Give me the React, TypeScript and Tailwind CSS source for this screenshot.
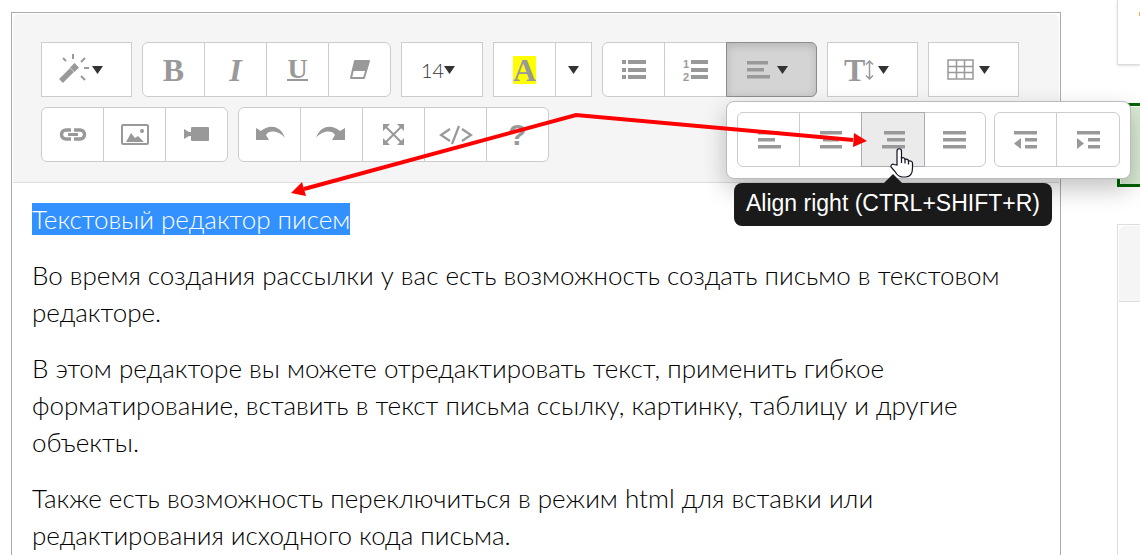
import type { ReactNode } from "react";
import clsx from "clsx";

const paragraphs = [
  "Во время создания рассылки у вас есть возможность создать письмо в текстовом редакторе.",
  "В этом редакторе вы можете отредактировать текст, применить гибкое форматирование, вставить в текст письма ссылку, картинку, таблицу и другие объекты.",
  "Также есть возможность переключиться в режим html для вставки или редактирования исходного кода письма.",
];

function Icon({ children }: { children: ReactNode }) {
  return (
    <svg aria-hidden viewBox="0 0 33 33" className="h-[33px] w-[33px] shrink-0 overflow-visible fill-[#999]">
      {children}
    </svg>
  );
}

function Rows({ rows }: { rows: [number, number][] }) {
  return (
    <Icon>
      {rows.map(([x, width], i) => (
        <rect key={i} x={x} y={8 + i * 7} width={width} height="3.5" />
      ))}
    </Icon>
  );
}

function Caret() {
  return (
    <svg aria-hidden viewBox="0 0 11 8" className="h-2 w-[11px] shrink-0 fill-[#333]">
      <path d="M0 0H11L5.5 8Z" />
    </svg>
  );
}

function Letter({ children, className = "text-[32px] leading-7" }: { children: ReactNode; className?: string }) {
  return (
    <span className={clsx("font-['Liberation_Serif',serif] font-bold text-[#999]", className)}>
      {children}
    </span>
  );
}

function Group({ children, square }: { children: ReactNode; square?: boolean }) {
  return (
    <div
      className={clsx(
        "flex",
        !square && "[&>*:first-child>button]:rounded-l-md [&>*:last-child>button]:rounded-r-md",
      )}
    >
      {children}
    </div>
  );
}

function ToolButton({
  label,
  children,
  className = "w-[63px]",
  tone = "border-[#ccc] bg-white",
  overlay,
}: {
  label: string;
  children: ReactNode;
  className?: string;
  tone?: string;
  overlay?: ReactNode;
}) {
  return (
    <div className={clsx("relative -ml-px first:ml-0", overlay && "z-10")}>
      <button
        type="button"
        aria-label={label}
        className={clsx("flex h-[55px] items-center justify-center border", tone, className)}
      >
        {children}
      </button>
      {overlay}
    </div>
  );
}

const dropdown = "w-[91px] gap-px pr-3";

function Tooltip({ children }: { children: ReactNode }) {
  return (
    <div
      role="tooltip"
      className="absolute left-1/2 top-[71px] -translate-x-1/2 whitespace-nowrap rounded-lg bg-[#1a1a1a] px-3 pb-[5px] pt-[3px] font-['Liberation_Sans',sans-serif] text-[23px] leading-[35px] text-white"
    >
      <span className="absolute -top-[9px] left-1/2 -ml-[9px] border-x-9 border-b-9 border-x-transparent border-b-[#1a1a1a]" />
      {children}
    </div>
  );
}

function ParagraphMenu() {
  return (
    <div className="absolute left-0 top-[59px] z-20 flex gap-2 rounded-lg border border-[#bbb] bg-white px-2.5 pb-[11px] pt-2.5 shadow-[0_10px_24px_rgba(0,0,0,0.24)]">
      <Group>
        <ToolButton label="Align left">
          <Rows rows={[[6, 21], [6, 17], [6, 23]]} />
        </ToolButton>
        <ToolButton label="Align center">
          <Rows rows={[[6, 22], [9, 16], [6, 22]]} />
        </ToolButton>
        <ToolButton
          label="Align right"
          className="w-16"
          tone="border-[#adadad] bg-[#ebebeb]"
          overlay={<Tooltip>Align right (CTRL+SHIFT+R)</Tooltip>}
        >
          <Rows rows={[[7, 21], [10, 18], [5, 23]]} />
        </ToolButton>
        <ToolButton label="Justify full" className="w-[62px]">
          <Rows rows={[[4, 23], [4, 23], [4, 23]]} />
        </ToolButton>
      </Group>
      <Group>
        <ToolButton label="Outdent">
          <Icon>
            <path d="M5 8h23v3.500H5zM16 15h12v3.500H16zM16 22h12v3.500H16zM5 20.500l7-5.500v11z" />
          </Icon>
        </ToolButton>
        <ToolButton label="Indent" className="w-16">
          <Icon>
            <path d="M5 8h23v3.500H5zM16 15h12v3.500H16zM16 22h12v3.500H16zM12 20.500l-7-5.500v11z" />
          </Icon>
        </ToolButton>
      </Group>
    </div>
  );
}

function Toolbar() {
  return (
    <div className="flex flex-wrap gap-2.5 rounded-t-md border-b border-[#ddd] bg-[#f5f5f5] px-7 pb-5 pt-7">
      <Group square>
        <ToolButton label="Style" className={dropdown}>
          <Icon>
            <path d="M3 28L14 17" stroke="#999" strokeWidth="5.500" />
            <path d="M16.500 10l4.500 4.500-4.500 4.500-4.500-4.500z" />
            <path d="M15 1v5M5 5l3 3M27 5l-4 4M26 15h5M23 23l4 4" stroke="#999" strokeWidth="2" />
          </Icon>
          <Caret />
        </ToolButton>
      </Group>

      <Group>
        <ToolButton label="Bold"><Letter>B</Letter></ToolButton>
        <ToolButton label="Italic"><Letter className="text-[32px] italic leading-7">I</Letter></ToolButton>
        <ToolButton label="Underline">
          <Letter className="border-b-2 border-[#999] text-[28px] leading-5">U</Letter>
        </ToolButton>
        <ToolButton label="Remove font style">
          <Icon>
            <path d="M12 8H26L21 25H8Z" fill="none" stroke="#999" strokeWidth="2" strokeLinejoin="round" />
            <path d="M12 8H26L23 18H9Z" />
          </Icon>
        </ToolButton>
      </Group>

      <Group square>
        <ToolButton label="Font size" className="w-[82px] pr-2">
          <span className="font-['Lato',sans-serif] text-xl font-light text-[#333]">14</span>
          <Caret />
        </ToolButton>
      </Group>

      <Group square>
        <ToolButton label="Recent color"><Letter className="bg-[#ff0] text-[32px] leading-7">A</Letter></ToolButton>
        <ToolButton label="More color" className="w-[37px]"><Caret /></ToolButton>
      </Group>

      <Group>
        <ToolButton label="Unordered list">
          <Icon>
            <path d="M5 7h4v4H5zM11 7h18v4H11zM5 15h4v4H5zM11 15h18v4H11zM5 22h4v4H5zM11 22h18v4H11z" />
          </Icon>
        </ToolButton>
        <ToolButton label="Ordered list">
          <Icon>
            <path d="M12 7h17v4H12zM12 15h17v4H12zM12 22h17v4H12z" />
            <text x="4" y="15" className="font-['Liberation_Sans',sans-serif] text-[11px] font-bold">1</text>
            <text x="4" y="28" className="font-['Liberation_Sans',sans-serif] text-[11px] font-bold">2</text>
          </Icon>
        </ToolButton>
        <ToolButton
          label="Paragraph"
          className={dropdown}
          tone="border-[#8c8c8c] bg-[#d4d4d4] shadow-[inset_0_3px_8px_rgba(0,0,0,0.15)]"
          overlay={<ParagraphMenu />}
        >
          <Rows rows={[[4, 21], [4, 17], [4, 23]]} />
          <Caret />
        </ToolButton>
      </Group>

      <Group square>
        <ToolButton label="Line height" className={dropdown}>
          <span className="flex w-[33px] items-center">
            <Letter>T</Letter>
            <svg aria-hidden viewBox="0 0 9 20" className="h-5 w-[9px] fill-none stroke-[#999]">
              <path d="M4.500 1V19M1 4.500L4.500 1L8 4.500M1 15.500L4.500 19L8 15.500" strokeWidth="1.500" />
            </svg>
          </span>
          <Caret />
        </ToolButton>
      </Group>

      <Group square>
        <ToolButton label="Table" className={dropdown}>
          <Icon>
            <path
              d="M3 7H28V26H3ZM3 13.500H28M3 19.500H28M11.500 7V26M19.500 7V26"
              fill="none"
              stroke="#999"
              strokeWidth="1.500"
            />
          </Icon>
          <Caret />
        </ToolButton>
      </Group>

      <Group>
        <ToolButton label="Link">
          <Icon>
            <path d="M15 12H10a4.500 4.500 0 0 0 0 9H15M18 12H24a4.500 4.500 0 0 1 0 9H18" fill="none" stroke="#999" strokeWidth="3.500" />
            <path d="M12 15h10v3H12z" />
          </Icon>
        </ToolButton>
        <ToolButton label="Picture">
          <Icon>
            <rect x="4" y="7" width="26" height="19" rx="1" fill="none" stroke="#999" strokeWidth="2" />
            <path d="M8 24L13 15L17 20L20 18L26 24Z" />
            <circle cx="24" cy="13" r="2" />
          </Icon>
        </ToolButton>
        <ToolButton label="Video">
          <Icon>
            <rect x="11" y="9" width="18" height="14" rx="1" />
            <path d="M4 11L9 14H11V18H9L4 21Z" />
          </Icon>
        </ToolButton>
      </Group>

      <Group>
        <ToolButton label="Undo">
          <Icon>
            <path d="M3 10L8 13C15 7 27 6 32 20C27 13 16 11 13 17L16 22H3Z" />
          </Icon>
        </ToolButton>
        <ToolButton label="Redo">
          <Icon>
            <path d="M30 10L25 13C18 7 6 6 1 20C6 13 17 11 20 17L17 22H30Z" />
          </Icon>
        </ToolButton>
        <ToolButton label="Full screen">
          <Icon>
            <path d="M6 6h7L6 13zM27 6v7L20 6zM6 27v-7l7 7zM27 27h-7l7-7z" />
            <path d="M8 8L25 25M25 8L8 25" stroke="#999" strokeWidth="2" />
          </Icon>
        </ToolButton>
        <ToolButton label="Code view">
          <Icon>
            <path d="M11 11L2 17L11 23M23 11L32 17L23 23M20 8L13 26" fill="none" stroke="#999" strokeWidth="2.200" />
          </Icon>
        </ToolButton>
        <ToolButton label="Help">
          <span className="font-['Liberation_Sans',sans-serif] text-3xl font-bold text-[#999]">?</span>
        </ToolButton>
      </Group>
    </div>
  );
}

function Sidebar() {
  return (
    <aside className="flex w-[23px] shrink-0 flex-col">
      <div className="flex h-[65px] justify-end border-b border-l border-[#ddd] pt-3 shadow-sm">
        <span className="h-1 w-px bg-[#f0b050]" />
      </div>
      <div className="mt-[38px] h-[84px] border-y-3 border-l-3 border-[#006400] bg-white pl-px pt-px">
        <div className="h-full bg-[#d9ead3]" />
      </div>
      <div className="mt-[37px] flex-1 border-l border-t border-[#ddd] pl-px pt-px">
        <div className="h-[76px] rounded-tl-md border-b border-[#ddd] bg-[#f5f5f5]" />
      </div>
    </aside>
  );
}

function Pointers() {
  return (
    <svg
      aria-hidden
      viewBox="0 0 640 200"
      className="pointer-events-none absolute left-[280px] top-0 z-30 h-[200px] w-[640px]"
    >
      <path d="M24 189L296 115L573 140" fill="none" stroke="red" strokeWidth="4" />
      <path d="M11 193L22 182L26 196ZM587 141L574 133L573 147Z" fill="red" />
      <path
        d="M617 165V151a2 2 0 0 1 4.500 0V158c2-.7 3.500 0 3.500 1.500c1.500-.8 3.400 0 3.500 1.500c2-.5 4 .3 4 2V168c0 5-2 9-7 9h-3c-4 0-5.500-2-7.500-5.500L611 167c-.5-2 1.500-3.500 3-2.500Z"
        fill="white"
        stroke="#112"
        strokeWidth="1.200"
      />
      <path d="M621.500 157v6M625 159.500v4M628.500 161v3.500" stroke="#112" strokeWidth="1.200" />
    </svg>
  );
}

export default function App() {
  return (
    <div className="relative flex h-screen gap-14 overflow-hidden bg-white pl-[11px] font-['Lato','Open_Sans',sans-serif]">
      <main className="relative z-10 mt-3 min-w-0 flex-1 border border-b-0 border-[#aaa] p-px">
        <Toolbar />
        <div className="flex flex-col gap-[19px] px-[19px] pt-[18px] text-[26px] font-light leading-[37px] text-black">
          <p><mark className="bg-[#3390ff] text-white">Текстовый редактор писем</mark></p>
          {paragraphs.map((text) => (
            <p key={text}>{text}</p>
          ))}
        </div>
      </main>
      <Sidebar />
      <Pointers />
    </div>
  );
}
